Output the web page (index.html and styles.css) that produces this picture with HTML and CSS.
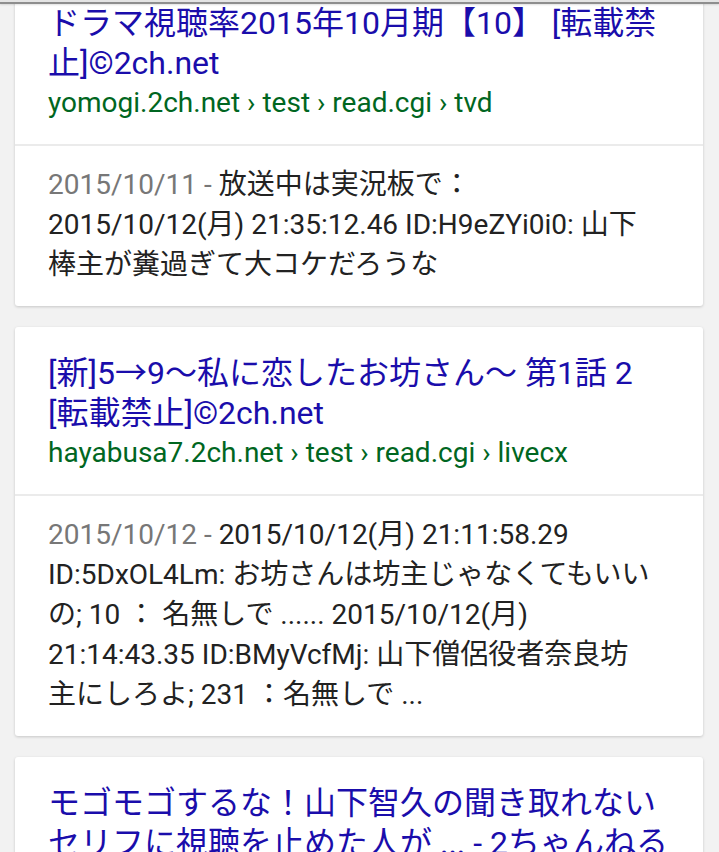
FILE: index.html
```html
<!DOCTYPE html>
<html lang="ja">

<head>
    <meta charset="UTF-8">
    <meta name="viewport" content="width=device-width, initial-scale=1.0">
    <title>検索結果</title>
    <link rel="stylesheet" href="styles.css">
</head>

<body>
    <div class="topbar"></div>

    <div class="results">
        <div class="card">
            <div class="card_head">
                <a class="title" href="#">ドラマ視聴率2015年10月期【10】 [転載禁止]©2ch.net</a>
                <div class="url">yomogi.2ch.net › test › read.cgi › tvd</div>
            </div>
            <div class="snippet"><span class="date">2015/10/11 - </span>放送中は実況板で： 2015/10/12(月) 21:35:12.46 ID:H9eZYi0i0: 山下棒主が糞過ぎて大コケだろうな</div>
        </div>

        <div class="card">
            <div class="card_head">
                <a class="title" href="#">[新]5→9〜私に恋したお坊さん〜 第1話 2 [転載禁止]©2ch.net</a>
                <div class="url">hayabusa7.2ch.net › test › read.cgi › livecx</div>
            </div>
            <div class="snippet"><span class="date">2015/10/12 - </span>2015/10/12(月) 21:11:58.29 ID:5DxOL4Lm: お坊さんは坊主じゃなくてもいいの; 10 ： 名無しで ...... 2015/10/12(月) 21:14:43.35 ID:BMyVcfMj: 山下僧侶役者奈良坊主にしろよ; 231 ：名無しで ...</div>
        </div>

        <div class="card">
            <div class="card_head">
                <a class="title" href="#">モゴモゴするな！山下智久の聞き取れないセリフに視聴を止めた人が ... - 2ちゃんねる</a>
            </div>
        </div>
    </div>
</body>

</html>
```

FILE: styles.css
```css
* {
    margin: 0;
    padding: 0;
    box-sizing: border-box;
}

body {
    background: #f2f2f2;
    font-family: Roboto, "Noto Sans CJK JP", sans-serif;
    overflow: hidden;
}

a {
    text-decoration: none;
}

/* browser toolbar edge that covers the top of the page */
.topbar {
    position: fixed;
    top: 0;
    left: 0;
    right: 0;
    height: 4px;
    background: #e4e4e4;
    border-bottom: 2px solid #8e8e8e;
    box-shadow: 0 1px 2px rgba(0, 0, 0, 0.12);
    z-index: 10;
}

.results {
    margin-top: -23px;
    padding: 0 16px 0 15px;
}

.card {
    background: #fff;
    border-radius: 3px;
    box-shadow: 0 1px 3px rgba(0, 0, 0, 0.18);
    margin-bottom: 21px;
}

.card .card_head {
    padding: 26px 32px 21px 33px;
}

.card .title {
    display: block;
    color: #1a0dab;
    font-size: 32px;
    line-height: 40px;
}

.card .url {
    color: #006621;
    font-size: 28px;
    line-height: 40px;
    white-space: nowrap;
}

.card .snippet {
    border-top: 2px solid #ebebeb;
    padding: 19px 52px 21px 33px;
    color: #222;
    font-size: 28px;
    line-height: 40px;
}

.card .snippet .date {
    color: #777;
}
```
